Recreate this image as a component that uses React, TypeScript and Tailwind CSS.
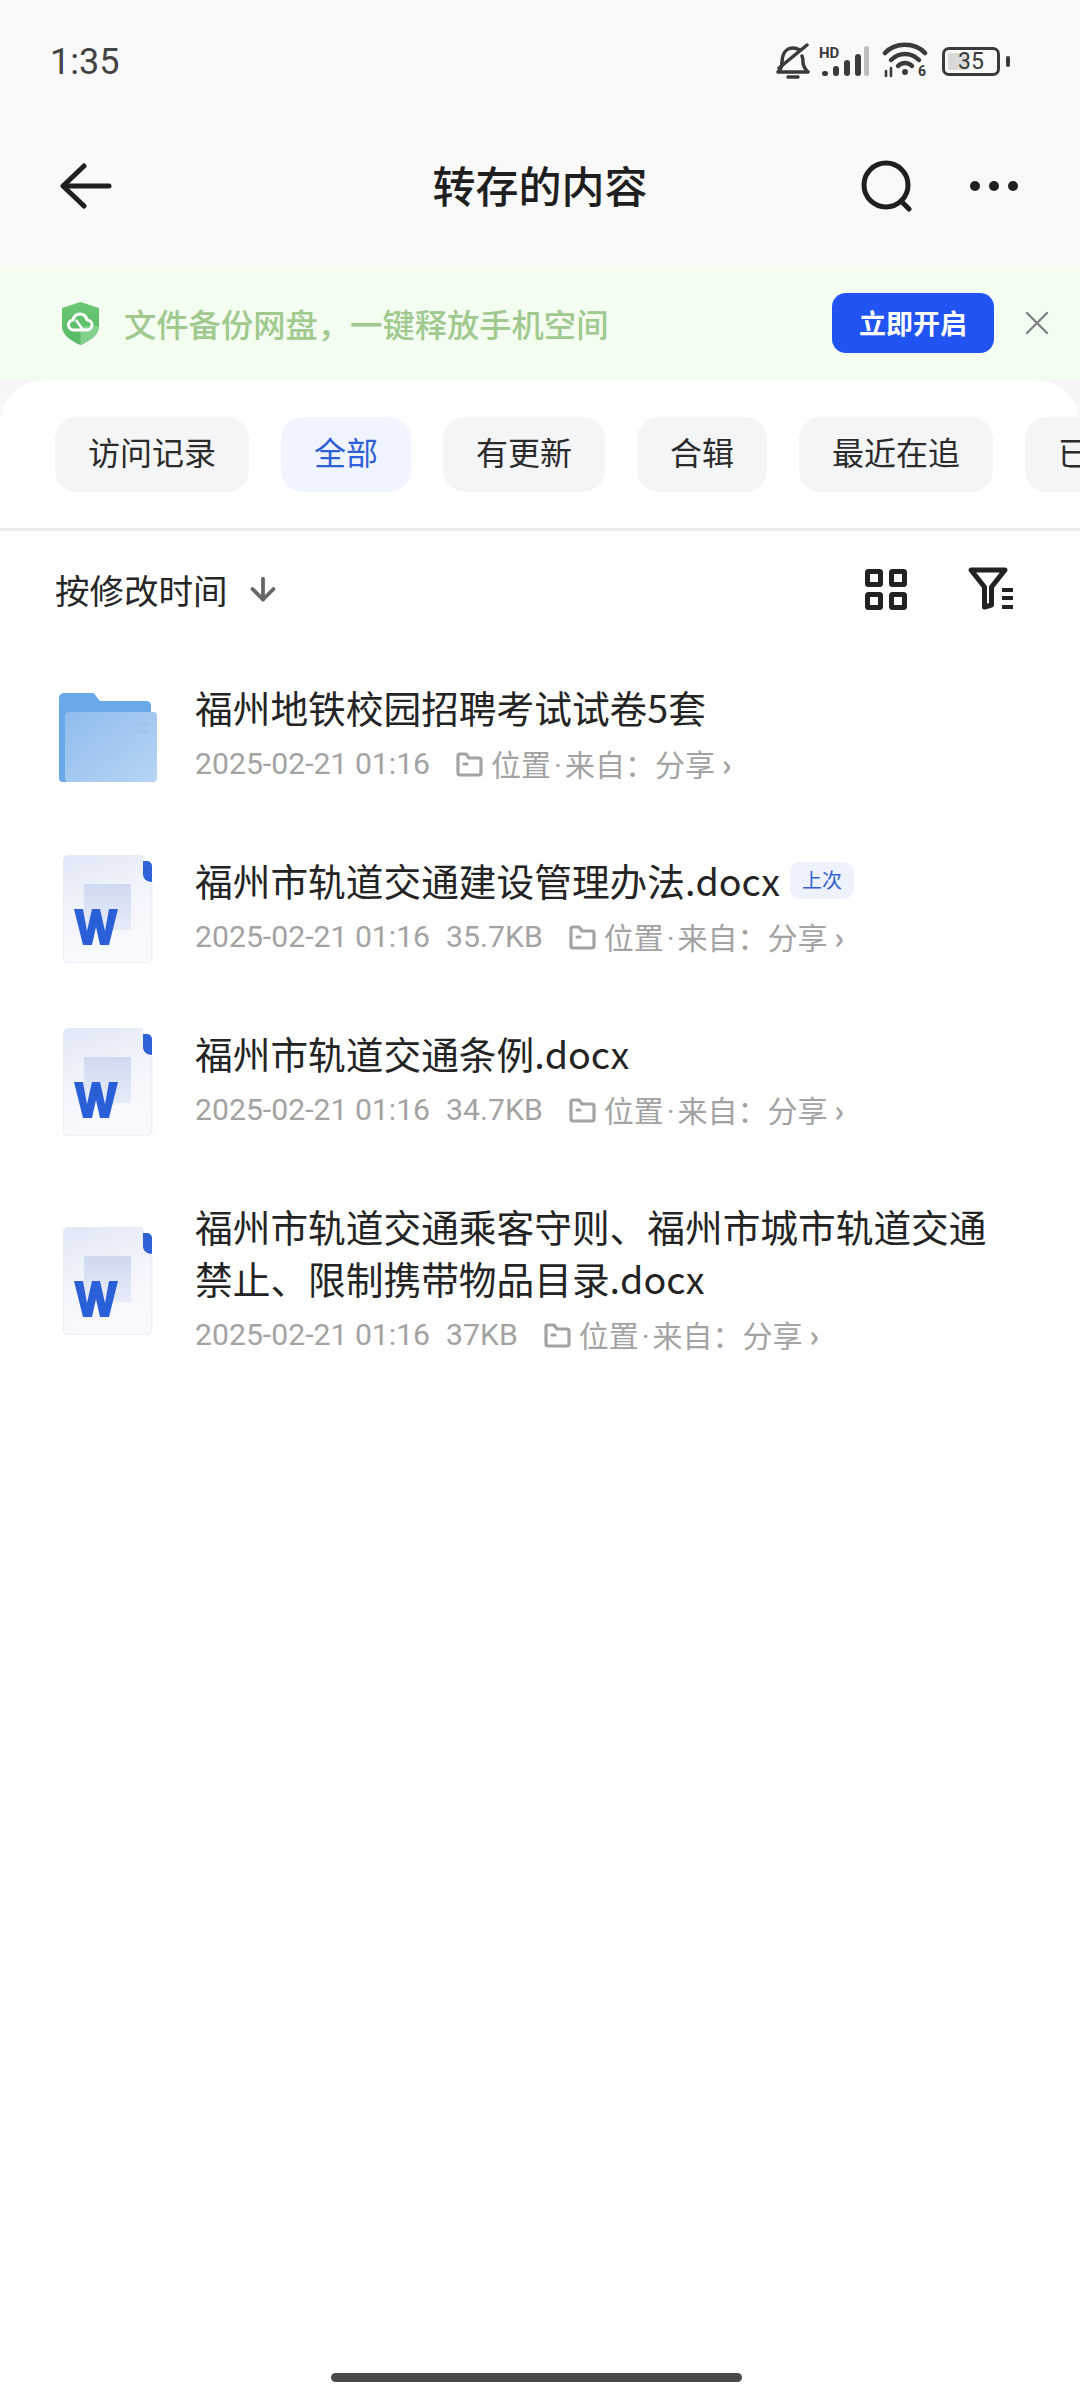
import { ArrowDown, X } from 'lucide-react';

interface FileRow {
  name: string[];
  size?: string;
  kind: 'folder' | 'word';
  tag?: string;
}

const tabs = ['访问记录', '全部', '有更新', '合辑', '最近在追', '已'];

const files: FileRow[] = [
  { name: ['福州地铁校园招聘考试试卷5套'], kind: 'folder' },
  { name: ['福州市轨道交通建设管理办法.docx'], size: '35.7KB', kind: 'word', tag: '上次' },
  { name: ['福州市轨道交通条例.docx'], size: '34.7KB', kind: 'word' },
  { name: ['福州市轨道交通乘客守则、福州市城市轨道交通', '禁止、限制携带物品目录.docx'], size: '37KB', kind: 'word' },
];

function BellOff() {
  return (
    <svg width="34" height="37" viewBox="0 0 34 37" fill="none" stroke="#3a3a3a" strokeWidth="3.500" strokeLinecap="round" strokeLinejoin="round">
      <path d="M6 20c0-9 4-15 11-15 3 0 5 1 7 2" />
      <path d="M26 13c1 2 1 4 1 6 0 4 2 7 5 10H2c2-2 4-5 4-9" />
      <path d="M3 25 31 2" />
      <path d="M12 34h10" />
    </svg>
  );
}

function Signal() {
  return (
    <svg width="50" height="34" viewBox="0 0 50 34">
      <text x="0" y="14" fontSize="15" fontWeight="700" fill="#3a3a3a" fontFamily="Roboto, sans-serif">HD</text>
      <rect x="3" y="27" width="6" height="5" rx="2.500" fill="#3a3a3a" />
      <rect x="14" y="22" width="6" height="10" rx="3" fill="#3a3a3a" />
      <rect x="25" y="16" width="6" height="16" rx="3" fill="#3a3a3a" />
      <rect x="36" y="10" width="6" height="22" rx="3" fill="#3a3a3a" />
      <rect x="45" y="2" width="5" height="30" rx="2.500" fill="#bdbdbd" />
    </svg>
  );
}

function Wifi() {
  return (
    <svg width="46" height="40" viewBox="0 0 46 40" fill="none" stroke="#3a3a3a" strokeWidth="4.500" strokeLinecap="round">
      <path d="M3 12C13 1 33 1 43 12" />
      <path d="M9 19c8-8 20-8 28 0" />
      <path d="M16 25c4-4 10-4 14 0" />
      <circle cx="23" cy="31" r="3" fill="#3a3a3a" stroke="none" />
      <path d="M4 30v5M9 27v8" strokeWidth="2.600" />
      <text x="36" y="35" fontSize="14" fontWeight="700" fill="#3a3a3a" stroke="none" fontFamily="Roboto, sans-serif">6</text>
    </svg>
  );
}

function Battery() {
  return (
    <div className="flex items-center gap-[6px]">
      <div className="relative w-[58px] h-[29px] rounded-[7px] border-[3px] border-[#3a3a3a] p-[3px]">
        <div className="h-full w-[21px] rounded-[2px] bg-[#d9d9d9]" />
        <span className="absolute inset-0 flex items-center justify-center text-[23px] leading-none text-[#3a3a3a] font-['Roboto',sans-serif]">35</span>
      </div>
      <div className="w-[4px] h-[11px] rounded-full bg-[#3a3a3a]" />
    </div>
  );
}

function ShieldIcon() {
  return (
    <svg width="37" height="43" viewBox="0 0 37 43">
      <defs>
        <linearGradient id="sh" x1="0" y1="0" x2="0" y2="1">
          <stop offset="0" stopColor="#6cc874" />
          <stop offset="1" stopColor="#57b966" />
        </linearGradient>
      </defs>
      <path d="M18.500 0 37 6v18c0 9-9 15-18.500 19C9 39 0 33 0 24V6Z" fill="url(#sh)" />
      <path d="M18.500 24H37c0 9-9 15-18.500 19Z" fill="#9ddca3" opacity="0.6" />
      <path d="M12 28a5 5 0 0 1-1-10c1-4 4-6 7-6s6 2 7 6a5 5 0 0 1 0 10Z" fill="none" stroke="#fff" strokeWidth="3" strokeLinejoin="round" />
      <path d="M14 18 21 28" fill="none" stroke="#fff" strokeWidth="2.500" />
    </svg>
  );
}

function FolderIcon() {
  return (
    <svg width="98" height="89" viewBox="0 0 98 89">
      <defs>
        <linearGradient id="fd" x1="0" y1="0" x2="1" y2="1">
          <stop offset="0" stopColor="#8fbcec" />
          <stop offset="1" stopColor="#b7d5f5" />
        </linearGradient>
      </defs>
      <path d="M0 5a5 5 0 0 1 5-5h28c2 0 3 1 4 3l4 5h47a5 5 0 0 1 4 5v20H8v56H4a4 4 0 0 1-4-4Z" fill="#69a9e8" />
      <rect x="6" y="19" width="92" height="70" rx="4" fill="url(#fd)" />
      <rect x="79" y="30" width="11" height="3" fill="#a3c4e8" />
      <rect x="79" y="37" width="11" height="3" fill="#a3c4e8" />
    </svg>
  );
}

function WordIcon() {
  return (
    <svg width="90" height="108" viewBox="0 0 90 108">
      <defs>
        <linearGradient id="wd" x1="0" y1="0" x2="0.300" y2="1">
          <stop offset="0" stopColor="#e1e7f6" />
          <stop offset="0.5" stopColor="#f1f4fb" />
          <stop offset="1" stopColor="#f8fafe" />
        </linearGradient>
        <linearGradient id="ws" x1="0" y1="0" x2="0" y2="1">
          <stop offset="0" stopColor="#cfdaf1" />
          <stop offset="1" stopColor="#e6ecf8" />
        </linearGradient>
      </defs>
      <path d="M6 0h70a4 4 0 0 1 4 4v22l9 3v73a6 6 0 0 1-6 6H6a6 6 0 0 1-6-6V6a6 6 0 0 1 6-6Z" fill="url(#wd)" stroke="#e6eaf3" />
      <path d="M80 6h4a5 5 0 0 1 5 5v16c-5 0-9-3-9-8Z" fill="#2f62d6" />
      <rect x="21" y="29" width="47" height="46" fill="url(#ws)" />
      <path d="M11 54h9l4 22 5-22h8l5 22 4-22h9l-9 36h-9l-4-18-4 18h-9Z" fill="#2a5fd8" />
    </svg>
  );
}

function FileIcon({ kind }: { kind: FileRow['kind'] }) {
  if (kind === 'folder') return <FolderIcon />;
  return <WordIcon />;
}

function SmallFolder() {
  return (
    <svg width="27" height="25" viewBox="0 0 27 25" fill="none" stroke="#a3a3a3" strokeWidth="3.200" strokeLinejoin="round">
      <path d="M2 4a2 2 0 0 1 2-2h6l3 4h10a2 2 0 0 1 2 2v13a2 2 0 0 1-2 2H4a2 2 0 0 1-2-2Z" />
      <path d="M8 12h3" strokeLinecap="round" />
    </svg>
  );
}

export default function App() {
  return (
    <div className="w-[1080px] h-[2403px] flex flex-col bg-[#f5f6f7] overflow-hidden font-['Noto_Sans_CJK_SC',sans-serif]">
      <div className="h-[266px] bg-[#f9f9f9] flex flex-col shrink-0">
        <div className="h-[122px] flex items-center justify-between pl-[50px] pr-[70px]">
          <span className="text-[36px] text-[#444444] font-['Roboto',sans-serif] pt-[2px]">1:35</span>
          <div className="flex items-center">
            <BellOff />
            <div className="ml-[9px]"><Signal /></div>
            <div className="ml-[13px]"><Wifi /></div>
            <div className="ml-[14px]"><Battery /></div>
          </div>
        </div>
        <div className="h-[128px] flex items-center justify-between pl-[60px] pr-[62px]">
          <svg width="52" height="46" viewBox="0 0 52 46" fill="none" stroke="#1f1f1f" strokeWidth="5" strokeLinecap="round" strokeLinejoin="round">
            <path d="M24 3 3 23l21 20" />
            <path d="M4 23h45" />
          </svg>
          <h1 className="ml-[107px] pb-[3px] text-[43px] font-medium text-[#1f1f1f]">转存的内容</h1>
          <div className="flex items-center gap-[57px]">
            <svg width="52" height="52" viewBox="0 0 52 52" fill="none" stroke="#1f1f1f" strokeWidth="5" strokeLinecap="round">
              <circle cx="25" cy="25" r="22" />
              <path d="M40 41l8 8" />
            </svg>
            <div className="flex items-center gap-[9px]">
              <div className="w-[10px] h-[10px] rounded-full bg-[#1f1f1f]" />
              <div className="w-[10px] h-[10px] rounded-full bg-[#1f1f1f]" />
              <div className="w-[10px] h-[10px] rounded-full bg-[#1f1f1f]" />
            </div>
          </div>
        </div>
      </div>

      <div className="h-[114px] bg-[#f3fdf0] flex items-center pl-[62px] pr-[23px] shrink-0">
        <ShieldIcon />
        <span className="ml-[25px] text-[32.3px] font-medium text-[#a1c98f]">文件备份网盘，一键释放手机空间</span>
        <button className="ml-auto w-[162px] h-[60px] rounded-[14px] bg-[#2254f4] text-white text-[27px] font-bold">立即开启</button>
        <X size={40} strokeWidth={1.4} className="ml-[23px] text-[#7d8285]" />
      </div>

      <div className="flex-1 bg-white rounded-t-[44px] flex flex-col">
        <div className="flex gap-[32px] pl-[55px] pt-[37px] pb-[36px] border-b-[3px] border-[#ebebeb] overflow-hidden">
          {tabs.map((tab) => (
            <div
              key={tab}
              className={`h-[75px] shrink-0 px-[33px] pb-[8px] rounded-[22px] flex items-center text-[32px] ${tab === '全部' ? 'bg-[#f0f4ff] text-[#2f5fd6]' : 'bg-[#f4f5f7] text-[#2b2b2b]'}`}
            >
              {tab}
            </div>
          ))}
        </div>

        <div className="h-[116px] flex items-center justify-between pl-[55px] pr-[65px] shrink-0">
          <div className="flex items-center gap-[17px]">
            <span className="pt-[2px] text-[34.500px] text-[#262626]">按修改时间</span>
            <ArrowDown size={36} strokeWidth={2.5} className="text-[#666666]" />
          </div>
          <div className="flex items-center gap-[60px]">
            <svg width="42" height="41" viewBox="0 0 42 41" fill="none" stroke="#222222" strokeWidth="5">
              <rect x="2.500" y="2.500" width="13" height="13" rx="1" />
              <rect x="26.500" y="2.500" width="13" height="13" rx="1" />
              <rect x="2.500" y="25.500" width="13" height="13" rx="1" />
              <rect x="26.500" y="25.500" width="13" height="13" rx="1" />
            </svg>
            <svg width="48" height="44" viewBox="0 0 48 44" fill="none" stroke="#222222" strokeWidth="5" strokeLinejoin="round">
              <path d="M4 3H38L24.500 20V38L17.500 40V20Z" />
              <path d="M35 23h11M35 31h11M35 40h11" strokeWidth="4" />
            </svg>
          </div>
        </div>

        <div className="flex flex-col">
          {files.map((file) => (
            <div key={file.name[0]} className="flex items-center pl-[59px] pr-[40px]">
              <div className="w-[136px] shrink-0">
                <div className={file.kind === 'word' ? 'ml-[4px] mt-[4px]' : 'mt-[7px]'}>
                  <FileIcon kind={file.kind} />
                </div>
              </div>
              <div className="flex flex-col gap-[11px] min-w-0 pt-[34px] pb-[36px]">
                <div className="text-[37.700px] leading-[52px] text-[#242424]">
                  {file.name.map((line, i) => (
                    <div key={i} className="flex items-center whitespace-nowrap">
                      {line}
                      {file.tag && (
                        <span className="ml-[10px] h-[37px] w-[64px] rounded-[10px] bg-[#eef2fe] text-[#3560d4] text-[20px] flex items-center justify-center">{file.tag}</span>
                      )}
                    </div>
                  ))}
                </div>
                <div className="h-[40px] flex items-center text-[30px] text-[#a3a3a3] whitespace-nowrap">
                  <span className="text-[30.200px] font-['Roboto',sans-serif]">2025-02-21 01:16</span>
                  {file.size && <span className="ml-[16px] text-[30.200px] font-['Roboto',sans-serif]">{file.size}</span>}
                  <div className="ml-[26px] mr-[8px]"><SmallFolder /></div>
                  <span>位置<span className="mx-[3px] font-['Roboto',sans-serif]">·</span>来自：分享 <span className="font-bold">›</span></span>
                </div>
              </div>
            </div>
          ))}
        </div>

        <div className="mt-auto mb-[21px] ml-[331px] w-[411px] h-[9px] rounded-full bg-[#4a4a4a]" />
      </div>
    </div>
  );
}
